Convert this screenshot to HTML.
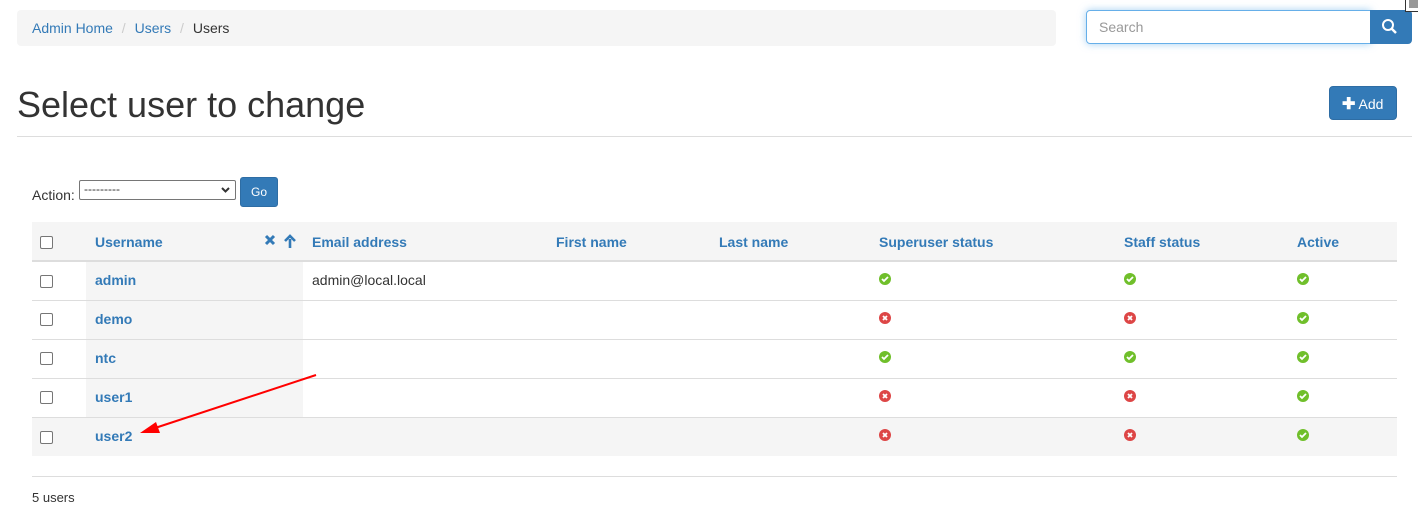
<!DOCTYPE html>
<html><head><style>
*{box-sizing:border-box}
body{margin:0;width:1418px;height:531px;background:#fff;font-family:"Liberation Sans",sans-serif;font-size:14px;color:#333;position:relative;overflow:hidden}
a{color:#337ab7;text-decoration:none}
.bc{position:absolute;left:17px;top:10px;width:1039px;height:36px;background:#f5f5f5;border-radius:4px;padding:10px 15px;font-size:14px}
.bc .s{color:#ccc;padding:0 5px}
.search{position:absolute;left:1086px;top:10px;width:285px;height:34px;border:1px solid #66afe9;border-radius:4px 0 0 4px;box-shadow:0 0 8px rgba(102,175,233,.6);padding:8px 12px;color:#999;font-size:14px}
.sbtn{position:absolute;left:1370px;top:10px;width:42px;height:34px;background:#337ab7;border-radius:0 4px 4px 0}
h1{position:absolute;left:17px;top:84px;margin:0;font-size:36px;font-weight:400;color:#333}
.hr{position:absolute;left:17px;top:136px;width:1395px;height:1px;background:#ddd}
.add{position:absolute;left:1329px;top:86px;width:68px;height:34px;background:#337ab7;border:1px solid #2e6da4;border-radius:4px;color:#fff;font-size:14px;padding:7px 0 0 12px}
.act{position:absolute;left:32px;top:187px;font-size:14px}
.sel{position:absolute;left:79px;top:180px;width:157px;height:20px;border:1px solid #767676;border-radius:2px;font-size:12px;padding:1px 4px;line-height:14px}
.go{position:absolute;left:240px;top:177px;width:38px;height:30px;background:#337ab7;border:1px solid #2e6da4;border-radius:3px;color:#fff;font-size:12px;text-align:center;line-height:28px}
table{position:absolute;left:32px;top:222px;width:1365px;border-collapse:collapse;table-layout:fixed}
th,td{text-align:left;padding:0 8px 0 9px;height:39px;font-size:14px}
th{background:#f5f5f5;border-bottom:2px solid #ddd;height:39px;color:#337ab7;padding-top:1px}
td{border-top:1px solid #ddd;padding-bottom:2px}
td.u{background:#f5f5f5;font-weight:bold}
tr.h td{background:#f5f5f5}
.cb{width:13px;height:13px;border:1px solid #767676;border-radius:2px;background:#fff;display:inline-block;vertical-align:middle;margin-left:-1px}
.foot{position:absolute;left:32px;top:476px;width:1365px;border-top:1px solid #ddd;padding-top:13px;font-size:13px}
</style></head><body>
<div class="bc"><a href="#">Admin Home</a><span class="s"> / </span><a href="#">Users</a><span class="s"> / </span>Users</div>
<div class="search">Search</div>
<div class="sbtn"><svg width="42" height="34"><circle cx="18" cy="15" r="5" fill="none" stroke="#fff" stroke-width="2"/><line x1="21.5" y1="18.5" x2="26" y2="23" stroke="#fff" stroke-width="2.5"/></svg></div>
<div style="position:absolute;left:1405px;top:-2px;width:14px;height:14px;border:1px solid #333;background:#fff"><div style="margin:1px 0 0 3px;width:9px;height:8px;background:#999"></div></div>
<h1>Select user to change</h1>
<div class="add"><b style="font-size:16px">✚</b> Add</div>
<div class="hr"></div>
<div class="act">Action:</div>
<div class="sel">---------</div>
<svg style="position:absolute;left:221px;top:187px" width="9" height="6"><path d="M1 1l3.5 3.5L8 1" stroke="#333" stroke-width="2" fill="none"/></svg>
<div class="go">Go</div>
<table>
<colgroup><col style="width:54px"><col style="width:217px"><col style="width:244px"><col style="width:163px"><col style="width:160px"><col style="width:245px"><col style="width:173px"><col></colgroup>
<tr><th><span class="cb"></span></th><th style="position:relative">Username<svg style="position:absolute;left:178px;top:12px" width="32" height="14"><path d="M2 2l8 8M10 2l-8 8" stroke="#337ab7" stroke-width="3"/><path d="M26 14V5M21 7l5-5 5 5" stroke="#337ab7" stroke-width="2.6" fill="none"/></svg></th><th>Email address</th><th>First name</th><th>Last name</th><th>Superuser status</th><th>Staff status</th><th>Active</th></tr>
<tr><td><span class="cb"></span></td><td class="u"><a href="#">admin</a></td><td>admin@local.local</td><td></td><td></td><td><svg width="12" height="12"><circle cx="6" cy="6" r="6" fill="#70bf2b"/><path d="M3 6l2 2 4-4" stroke="#fff" stroke-width="1.8" fill="none"/></svg></td><td><svg width="12" height="12"><circle cx="6" cy="6" r="6" fill="#70bf2b"/><path d="M3 6l2 2 4-4" stroke="#fff" stroke-width="1.8" fill="none"/></svg></td><td><svg width="12" height="12"><circle cx="6" cy="6" r="6" fill="#70bf2b"/><path d="M3 6l2 2 4-4" stroke="#fff" stroke-width="1.8" fill="none"/></svg></td></tr>
<tr><td><span class="cb"></span></td><td class="u"><a href="#">demo</a></td><td></td><td></td><td></td><td><svg width="12" height="12"><circle cx="6" cy="6" r="6" fill="#dd4646"/><path d="M4 4l4 4M8 4l-4 4" stroke="#fff" stroke-width="1.8"/></svg></td><td><svg width="12" height="12"><circle cx="6" cy="6" r="6" fill="#dd4646"/><path d="M4 4l4 4M8 4l-4 4" stroke="#fff" stroke-width="1.8"/></svg></td><td><svg width="12" height="12"><circle cx="6" cy="6" r="6" fill="#70bf2b"/><path d="M3 6l2 2 4-4" stroke="#fff" stroke-width="1.8" fill="none"/></svg></td></tr>
<tr><td><span class="cb"></span></td><td class="u"><a href="#">ntc</a></td><td></td><td></td><td></td><td><svg width="12" height="12"><circle cx="6" cy="6" r="6" fill="#70bf2b"/><path d="M3 6l2 2 4-4" stroke="#fff" stroke-width="1.8" fill="none"/></svg></td><td><svg width="12" height="12"><circle cx="6" cy="6" r="6" fill="#70bf2b"/><path d="M3 6l2 2 4-4" stroke="#fff" stroke-width="1.8" fill="none"/></svg></td><td><svg width="12" height="12"><circle cx="6" cy="6" r="6" fill="#70bf2b"/><path d="M3 6l2 2 4-4" stroke="#fff" stroke-width="1.8" fill="none"/></svg></td></tr>
<tr><td><span class="cb"></span></td><td class="u"><a href="#">user1</a></td><td></td><td></td><td></td><td><svg width="12" height="12"><circle cx="6" cy="6" r="6" fill="#dd4646"/><path d="M4 4l4 4M8 4l-4 4" stroke="#fff" stroke-width="1.8"/></svg></td><td><svg width="12" height="12"><circle cx="6" cy="6" r="6" fill="#dd4646"/><path d="M4 4l4 4M8 4l-4 4" stroke="#fff" stroke-width="1.8"/></svg></td><td><svg width="12" height="12"><circle cx="6" cy="6" r="6" fill="#70bf2b"/><path d="M3 6l2 2 4-4" stroke="#fff" stroke-width="1.8" fill="none"/></svg></td></tr>
<tr class="h"><td><span class="cb"></span></td><td class="u"><a href="#">user2</a></td><td></td><td></td><td></td><td><svg width="12" height="12"><circle cx="6" cy="6" r="6" fill="#dd4646"/><path d="M4 4l4 4M8 4l-4 4" stroke="#fff" stroke-width="1.8"/></svg></td><td><svg width="12" height="12"><circle cx="6" cy="6" r="6" fill="#dd4646"/><path d="M4 4l4 4M8 4l-4 4" stroke="#fff" stroke-width="1.8"/></svg></td><td><svg width="12" height="12"><circle cx="6" cy="6" r="6" fill="#70bf2b"/><path d="M3 6l2 2 4-4" stroke="#fff" stroke-width="1.8" fill="none"/></svg></td></tr>
</table>
<svg style="position:absolute;left:0;top:0" width="1418" height="531"><line x1="316" y1="375" x2="152" y2="429" stroke="#f00" stroke-width="2"/><polygon points="140,433 156,422 160,433" fill="#f00"/></svg>
<div class="foot">5 users</div>
</body></html>
